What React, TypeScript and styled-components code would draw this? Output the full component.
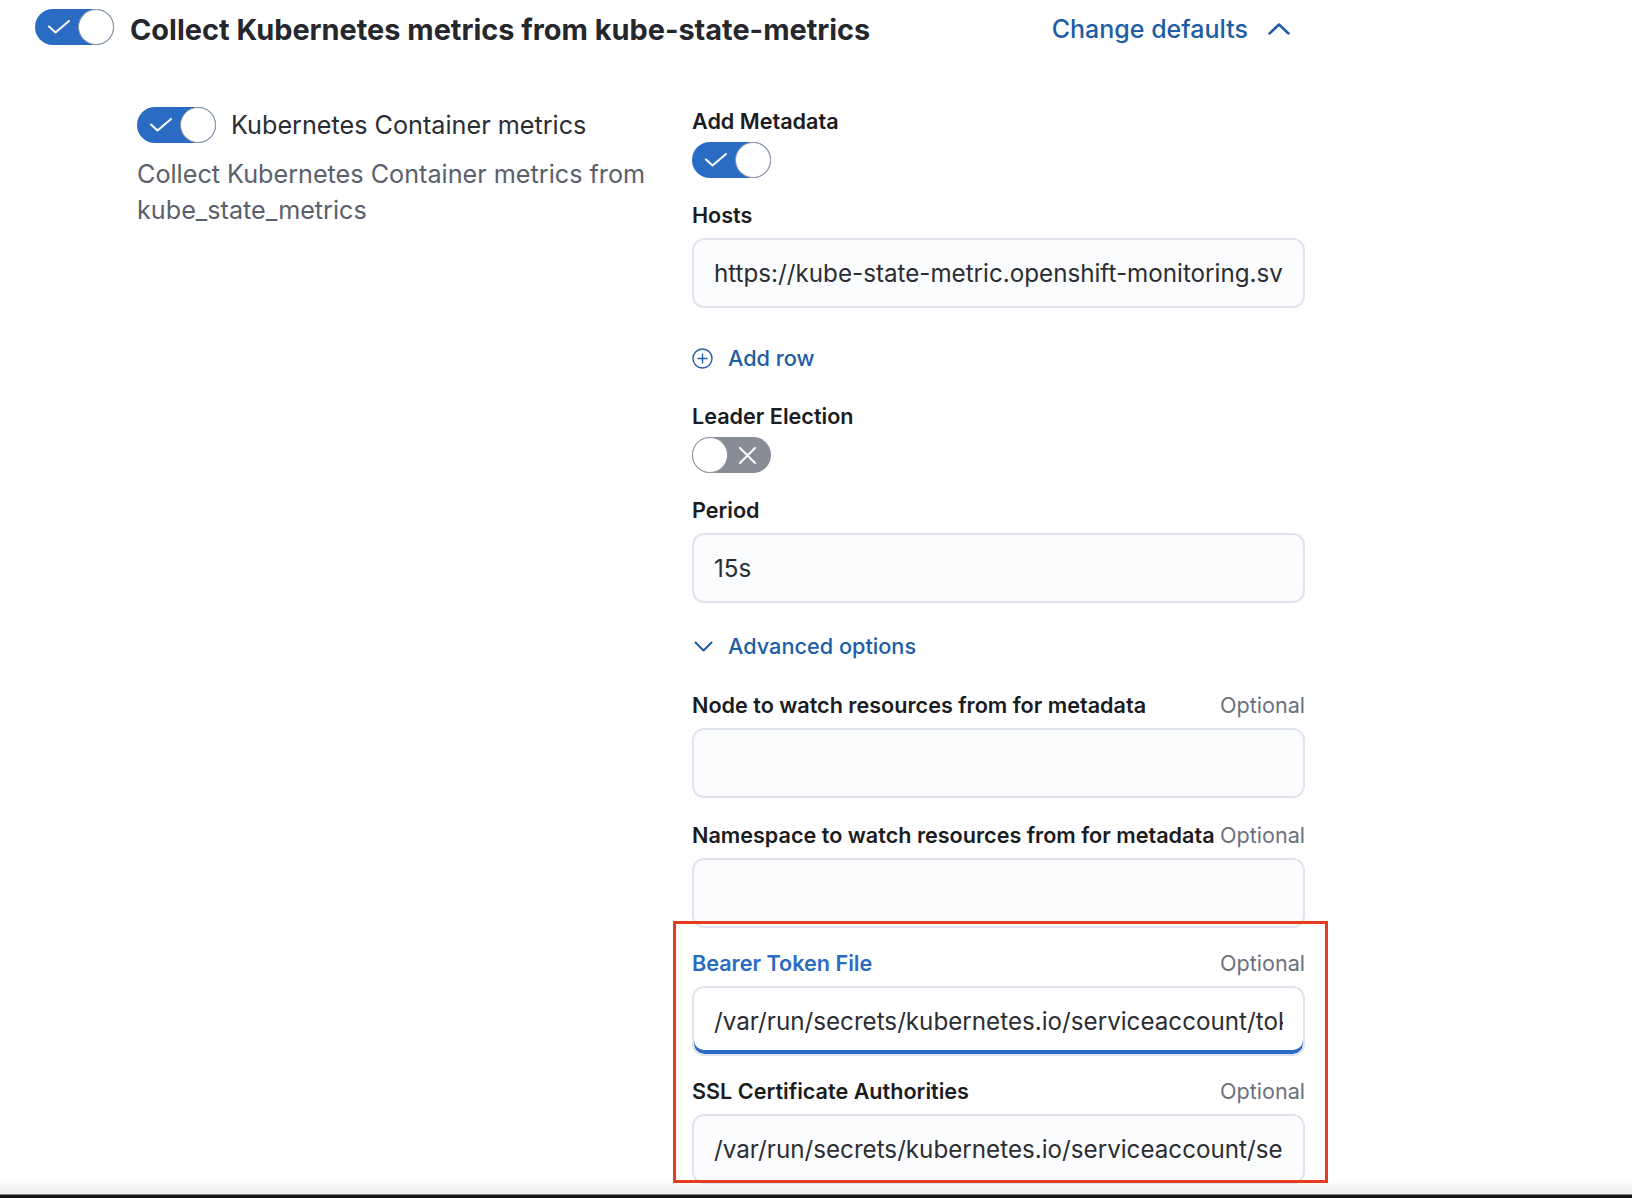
import React from "react";
import styled, { createGlobalStyle } from "styled-components";

const GlobalStyle = createGlobalStyle`
  html, body {
    margin: 0;
    padding: 0;
    background: #ffffff;
  }
  body {
    font-family: Inter, "Noto Sans", "Liberation Sans", sans-serif;
    -webkit-font-smoothing: antialiased;
  }
  * { box-sizing: border-box; }
`;

const Page = styled.div`
  position: relative;
  width: 1632px;
  height: 1198px;
  overflow: hidden;
  background: #ffffff;
`;

const Header = styled.div`
  display: flex;
  align-items: center;
  justify-content: space-between;
  width: 1290px;
  padding: 6px 0 0 35px;
`;

const HeaderLeft = styled.div`
  display: flex;
  align-items: center;
  gap: 16px;
`;

const Title = styled.h2`
  margin: 0;
  padding-top: 6px;
  font-size: 28.9px;
  line-height: 36px;
  font-weight: 700;
  color: #25272d;
`;

const LinkButton = styled.button<{ $gap?: number }>`
  display: flex;
  align-items: center;
  gap: ${(p) => p.$gap ?? 18}px;
  border: 0;
  background: none;
  padding: 0;
  font-family: inherit;
  color: #1c5da6;
  cursor: pointer;
`;

const HeaderLink = styled(LinkButton)`
  padding-top: 4px;
  font-size: 25px;
  line-height: 30px;
  font-weight: 500;
`;

const Body = styled.div`
  display: grid;
  grid-template-columns: 555px 613px;
  padding-left: 137px;
  margin-top: 59px;
`;

const LeftCol = styled.div`
  display: flex;
  flex-direction: column;
  gap: 13px;
`;

const SwitchRow = styled.div`
  display: flex;
  align-items: center;
  gap: 15px;
`;

const SwitchLabel = styled.span`
  font-size: 25.2px;
  line-height: 36px;
  color: #2b2d33;
`;

const Description = styled.p`
  margin: 0;
  max-width: 530px;
  font-size: 25.2px;
  line-height: 36px;
  color: #5a606c;
`;

const RightCol = styled.div`
  display: flex;
  flex-direction: column;
  gap: 23px;
`;

const Field = styled.div<{ $tight?: boolean }>`
  display: flex;
  flex-direction: column;
  margin-top: ${(p) => (p.$tight ? "-2px" : "0")};
`;

const LabelRow = styled.div<{ $gap: number }>`
  display: flex;
  justify-content: space-between;
  align-items: baseline;
  height: 28px;
  white-space: nowrap;
  margin-bottom: ${(p) => p.$gap}px;
`;

const Label = styled.label<{ $active?: boolean }>`
  font-size: 21.6px;
  line-height: 28px;
  font-weight: 600;
  color: ${(p) => (p.$active ? "#2a6bc3" : "#1a1c21")};
`;

const Optional = styled.span`
  font-size: 21.6px;
  line-height: 28px;
  color: #6a717d;
`;

const TextInput = styled.input<{ $focused?: boolean }>`
  width: 100%;
  height: 70px;
  padding: 0 20px;
  border: 2px solid #e1e4ee;
  border-radius: 12px;
  background: ${(p) => (p.$focused ? "#ffffff" : "#fbfcfd")};
  box-shadow: ${(p) => (p.$focused ? "inset 0 -4px 0 #2a6bc3" : "none")};
  font-family: inherit;
  font-size: 24.2px;
  color: #2b2d33;
  outline: none;
`;

const AddRow = styled(LinkButton)`
  margin: 35px 0 6px;
  font-size: 21.7px;
  line-height: 30px;
  font-weight: 500;
`;

const Advanced = styled(LinkButton)`
  margin: 5px 0 7px;
  font-size: 21.7px;
  line-height: 30px;
  font-weight: 500;
`;

const Track = styled.button<{ $on: boolean }>`
  position: relative;
  display: flex;
  align-items: center;
  justify-content: ${(p) => (p.$on ? "flex-start" : "flex-end")};
  width: 79px;
  height: 36px;
  flex: none;
  padding: ${(p) => (p.$on ? "0 0 0 13px" : "0 15px 0 0")};
  border: 0;
  border-radius: 18px;
  background: ${(p) => (p.$on ? "#2a6bc3" : "#888c97")};
  cursor: pointer;
`;

const Knob = styled.span<{ $on: boolean }>`
  position: absolute;
  top: 0;
  ${(p) => (p.$on ? "right: 0;" : "left: 0;")}
  width: 36px;
  height: 36px;
  border-radius: 50%;
  background: #ffffff;
  border: 1.5px solid #8f949e;
`;

const Switch = ({ on }: { on: boolean }) => (
  <Track $on={on} type="button" aria-pressed={on}>
    {on ? (
      <svg width="22" height="14" viewBox="0 0 22 14" fill="none">
        <polyline points="1,6.5 7.5,12.5 21,1" stroke="#fff" strokeWidth="2" strokeLinecap="round" strokeLinejoin="round" />
      </svg>
    ) : (
      <svg width="17" height="17" viewBox="0 0 17 17" fill="none">
        <path d="M1 1 L16 16 M16 1 L1 16" stroke="#fff" strokeWidth="2" strokeLinecap="round" />
      </svg>
    )}
    <Knob $on={on} />
  </Track>
);

const RedBox = styled.div`
  position: absolute;
  left: 673px;
  top: 921px;
  width: 655px;
  height: 262px;
  border: 3px solid #e63c1c;
  pointer-events: none;
`;

const BottomEdge = styled.div`
  position: absolute;
  left: 0;
  right: 0;
  bottom: 0;
  height: 18px;
  background: linear-gradient(
    to bottom,
    rgba(0, 0, 0, 0) 0px,
    rgba(0, 0, 0, 0.07) 14px,
    #141414 15px,
    #141414 18px
  );
`;

type FieldProps = {
  label: string;
  optional?: boolean;
  active?: boolean;
  tight?: boolean;
  gap?: number;
  children: React.ReactNode;
};

const FormField = ({ label, optional, active, tight, gap = 9, children }: FieldProps) => (
  <Field $tight={tight}>
    <LabelRow $gap={gap}>
      <Label $active={active}>{label}</Label>
      {optional && <Optional>Optional</Optional>}
    </LabelRow>
    {children}
  </Field>
);

export default function App() {
  return (
    <Page>
      <GlobalStyle />
      <Header>
        <HeaderLeft>
          <Switch on />
          <Title>Collect Kubernetes metrics from kube-state-metrics</Title>
        </HeaderLeft>
        <HeaderLink $gap={20}>
          Change defaults
          <svg width="22" height="12" viewBox="0 0 22 12" fill="none">
            <polyline points="1.5,10.5 11,1.5 20.5,10.5" stroke="#1c5da6" strokeWidth="2.5" strokeLinecap="round" strokeLinejoin="round" />
          </svg>
        </HeaderLink>
      </Header>

      <Body>
        <LeftCol>
          <SwitchRow>
            <Switch on />
            <SwitchLabel>Kubernetes Container metrics</SwitchLabel>
          </SwitchRow>
          <Description>Collect Kubernetes Container metrics from kube_state_metrics</Description>
        </LeftCol>

        <RightCol>
          <FormField label="Add Metadata" gap={7}>
            <Switch on />
          </FormField>
          <Field>
            <FormField label="Hosts">
              <TextInput readOnly value="https://kube-state-metric.openshift-monitoring.svc:8443" />
            </FormField>
            <AddRow $gap={15}>
              <svg width="21" height="21" viewBox="0 0 21 21" fill="none">
                <circle cx="10.5" cy="10.5" r="9.5" stroke="#1c5da6" strokeWidth="1.4" />
                <path d="M10.5 5.5 V15.5 M5.5 10.5 H15.5" stroke="#1c5da6" strokeWidth="1.4" />
              </svg>
              Add row
            </AddRow>
          </Field>
          <FormField label="Leader Election" gap={7}>
            <Switch on={false} />
          </FormField>
          <FormField label="Period">
            <TextInput readOnly value="15s" />
          </FormField>
          <Advanced $gap={15}>
            <svg width="19" height="11" viewBox="0 0 19 11" fill="none" style={{ marginLeft: 2 }}>
              <polyline points="1.5,1.5 9.5,9.5 17.5,1.5" stroke="#1c5da6" strokeWidth="2" strokeLinecap="round" strokeLinejoin="round" />
            </svg>
            Advanced options
          </Advanced>
          <FormField label="Node to watch resources from for metadata" optional>
            <TextInput readOnly value="" />
          </FormField>
          <FormField label="Namespace to watch resources from for metadata" optional>
            <TextInput readOnly value="" />
          </FormField>
          <FormField label="Bearer Token File" optional active tight>
            <TextInput $focused readOnly value="/var/run/secrets/kubernetes.io/serviceaccount/token" />
          </FormField>
          <FormField label="SSL Certificate Authorities" optional tight>
            <TextInput readOnly value="/var/run/secrets/kubernetes.io/serviceaccount/service-ca.crt" />
          </FormField>
        </RightCol>
      </Body>

      <RedBox />
      <BottomEdge />
    </Page>
  );
}
